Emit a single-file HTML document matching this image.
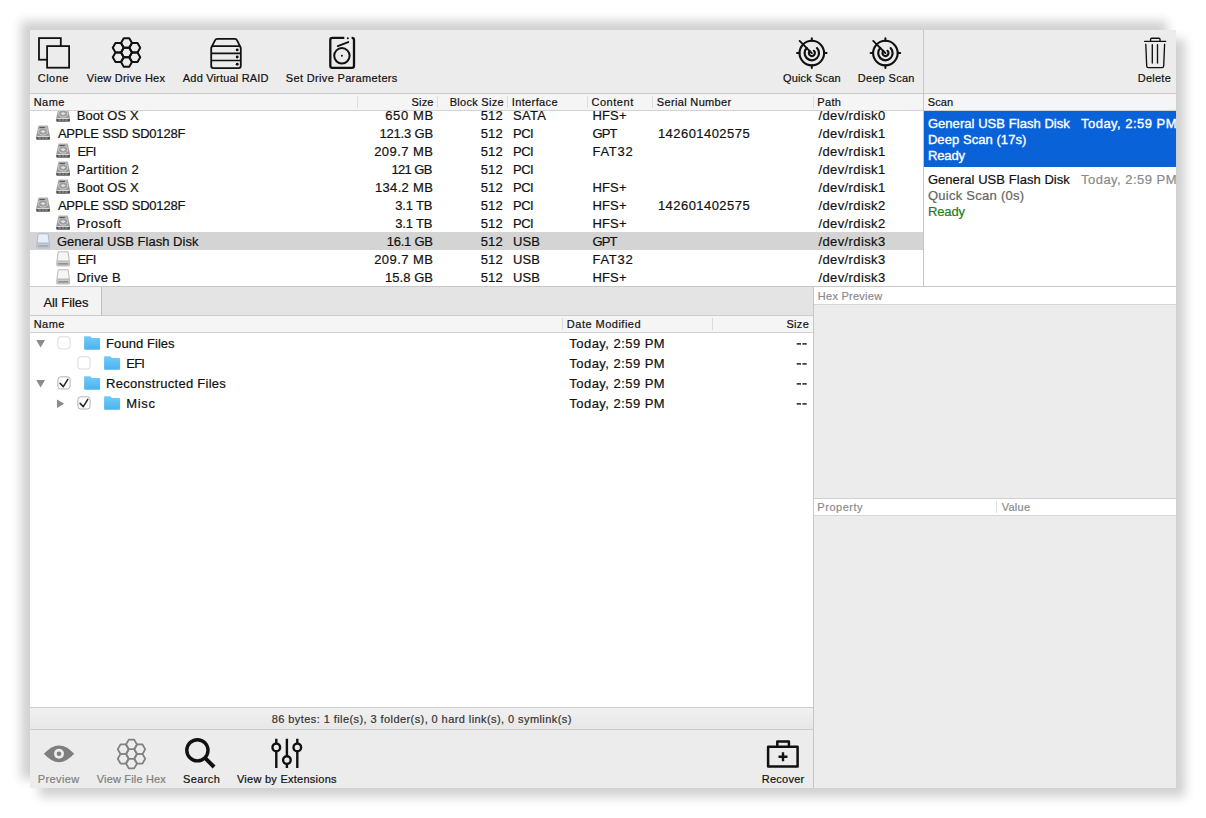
<!DOCTYPE html>
<html><head><meta charset="utf-8"><title>Data Rescue</title>
<style>
html,body{margin:0;padding:0;background:#fff;}
body{width:1206px;height:818px;position:relative;overflow:hidden;font-family:"Liberation Sans",sans-serif;color:#111;}
.a{position:absolute;}
#win{left:30px;top:30px;width:1146px;height:758px;background:#ececec;
 box-shadow:-9px -9px 10px rgba(0,0,0,.185), 9px 9px 10px rgba(0,0,0,.185);}
.t{position:absolute;white-space:pre;-webkit-text-stroke:0.2px currentColor;}
.s11{font-size:11px;line-height:16px;}
.s13{font-size:13px;line-height:18px;}
.sel{-webkit-text-stroke:0.35px #fff;}
.hl{position:absolute;height:1px;}
.vl{position:absolute;width:1px;}
#clip0{position:absolute;left:0;top:111px;width:1206px;height:20px;overflow:hidden;}
#clip0 .t{margin-top:-111px;}
svg{position:absolute;left:0;top:0;}
</style></head>
<body>
<div id="win" class="a"></div>

<!-- top toolbar border -->
<div class="hl" style="left:30px;top:93px;width:1146px;background:#cbcbcb"></div>

<!-- drive table -->
<div class="a" style="left:30px;top:94px;width:893px;height:16px;background:#f5f5f5"></div>
<div class="hl" style="left:30px;top:110px;width:893px;background:#d2d2d2"></div>
<div class="a" style="left:30px;top:111px;width:893px;height:175px;background:#fff"></div>
<div class="a" style="left:30px;top:232px;width:893px;height:18px;background:#d4d4d4"></div>
<!-- drive header separators -->
<div class="vl" style="left:357px;top:96px;height:12px;background:#dcdcdc"></div>
<div class="vl" style="left:437px;top:96px;height:12px;background:#dcdcdc"></div>
<div class="vl" style="left:507px;top:96px;height:12px;background:#dcdcdc"></div>
<div class="vl" style="left:587px;top:96px;height:12px;background:#dcdcdc"></div>
<div class="vl" style="left:652px;top:96px;height:12px;background:#dcdcdc"></div>
<div class="vl" style="left:813px;top:96px;height:12px;background:#dcdcdc"></div>

<!-- scan pane -->
<div class="vl" style="left:923px;top:30px;height:257px;background:#c6c6c6"></div>
<div class="a" style="left:924px;top:94px;width:252px;height:16px;background:#f5f5f5"></div>
<div class="hl" style="left:924px;top:110px;width:252px;background:#d2d2d2"></div>
<div class="a" style="left:924px;top:111px;width:252px;height:175px;background:#fff"></div>
<div class="a" style="left:924px;top:111px;width:252px;height:56px;background:#0a62d8"></div>

<!-- divider under tables -->
<div class="hl" style="left:30px;top:286px;width:1146px;background:#c8c8c8"></div>

<!-- tab bar -->
<div class="a" style="left:30px;top:287px;width:783px;height:28px;background:#e4e4e4"></div>
<div class="a" style="left:30px;top:287px;width:71px;height:28px;background:#f3f3f3"></div>
<div class="vl" style="left:101px;top:287px;height:28px;background:#bfbfbf"></div>
<div class="hl" style="left:30px;top:315px;width:783px;background:#cbcbcb"></div>

<!-- file list -->
<div class="a" style="left:30px;top:316px;width:783px;height:16px;background:#f5f5f5"></div>
<div class="hl" style="left:30px;top:332px;width:783px;background:#d2d2d2"></div>
<div class="a" style="left:30px;top:333px;width:783px;height:374px;background:#fff"></div>
<div class="vl" style="left:562px;top:318px;height:12px;background:#dcdcdc"></div>
<div class="vl" style="left:712px;top:318px;height:12px;background:#dcdcdc"></div>

<!-- status bar -->
<div class="hl" style="left:30px;top:707px;width:783px;background:#cbcbcb"></div>
<div class="a" style="left:30px;top:708px;width:783px;height:21px;background:linear-gradient(#f1f1f1,#e7e7e7)"></div>
<div class="hl" style="left:30px;top:729px;width:783px;background:#cbcbcb"></div>

<!-- right pane -->
<div class="vl" style="left:813px;top:287px;height:501px;background:#c6c6c6"></div>
<div class="a" style="left:814px;top:287px;width:362px;height:17px;background:#fff"></div>
<div class="hl" style="left:814px;top:304px;width:362px;background:#d6d6d6"></div>
<div class="hl" style="left:814px;top:498px;width:362px;background:#d0d0d0"></div>
<div class="a" style="left:814px;top:499px;width:362px;height:16px;background:#fff"></div>
<div class="hl" style="left:814px;top:515px;width:362px;background:#d6d6d6"></div>
<div class="vl" style="left:996px;top:501px;height:12px;background:#e0e0e0"></div>

<svg width="1206" height="818" viewBox="0 0 1206 818">
<defs>
 <!-- honeycomb: 7 flat-top hexagons, R=5.5, centred at 0,0 -->
 <g id="hex1"><path d="M5.5 0 L2.75 4.763 L-2.75 4.763 L-5.5 0 L-2.75 -4.763 L2.75 -4.763 Z"/></g>
 <g id="honey" fill="none" stroke-linejoin="round">
  <use href="#hex1"/>
  <use href="#hex1" y="-9.526"/><use href="#hex1" y="9.526"/>
  <use href="#hex1" x="-8.25" y="-4.763"/><use href="#hex1" x="8.25" y="-4.763"/>
  <use href="#hex1" x="-8.25" y="4.763"/><use href="#hex1" x="8.25" y="4.763"/>
 </g>
 <!-- radar, centred at 0,0 -->
 <g id="radar" fill="none" stroke="#111" stroke-width="2.1" stroke-linecap="round">
  <circle r="12.3"/>
  <path d="M0 -12.3V-14.8 M0 12.3V14.8 M-12.3 0H-14.8 M12.3 0H14.8" stroke-width="2"/>
  <path d="M-5.1 -5.1 A7.2 7.2 0 1 0 5.2 -5" stroke-width="2.2"/>
  <path d="M-2.1 -2.1 A3 3 0 1 0 2.1 -2.3" stroke-width="2.2"/>
  <path d="M0 0 L-12.2 -12.2" stroke-width="1.9"/>
 </g>

 <linearGradient id="gHdd" x1="0" y1="0" x2="0" y2="1"><stop offset="0" stop-color="#b4b4b4"/><stop offset="1" stop-color="#848484"/></linearGradient>
 <linearGradient id="gFol" x1="0" y1="0" x2="0" y2="1"><stop offset="0" stop-color="#70cbfb"/><stop offset="1" stop-color="#4bb3ee"/></linearGradient>
 <!-- HDD 14x15 -->
 <g id="hdd">
  <path d="M2.3 0.2 H11.7 L13.8 10.8 V14 Q13.8 14.8 13 14.8 H1 Q0.2 14.8 0.2 14 V10.8 Z" fill="url(#gHdd)"/>
  <ellipse cx="7" cy="6.3" rx="4.6" ry="3.4" fill="#9c9c9c" stroke="#d2d2d2" stroke-width="0.9"/>
  <path d="M4.2 6.3 L7 4.7 L9.8 6.3 L7 7.9 Z" fill="#dcdcdc"/>
  <rect x="3.4" y="1.6" width="5.4" height="1.3" fill="#5a5a5a"/>
  <rect x="0.7" y="10.6" width="12.6" height="1" fill="#f2f2f2"/>
  <rect x="0.3" y="11.6" width="13.4" height="2.2" fill="#4e4e4e"/>
  <rect x="2.2" y="12.3" width="2.6" height="0.8" fill="#c8c8c8"/><rect x="5.6" y="12.3" width="2.6" height="0.8" fill="#c8c8c8"/><rect x="9" y="12.3" width="2.6" height="0.8" fill="#c8c8c8"/>
 </g>
 <!-- USB drive 14x15 -->
 <g id="usb">
  <path d="M2 0.5 H12 L13.2 9.9 H0.8 Z" fill="#f6f6f6" stroke="#b2b2b2" stroke-width="0.9"/>
  <rect x="0.5" y="9.9" width="13" height="4.8" rx="1" fill="#cbcbcb" stroke="#adadad" stroke-width="0.7"/>
  <rect x="1.9" y="12.1" width="10.2" height="1" fill="#6c6c6c"/>
 </g>
 <g id="usbsel">
  <path d="M2 0.5 H12 L13.2 9.9 H0.8 Z" fill="#e6eefa" stroke="#a9b6c8" stroke-width="0.9"/>
  <rect x="0.5" y="9.9" width="13" height="4.8" rx="1" fill="#c6cdd7" stroke="#a6b0bd" stroke-width="0.7"/>
  <rect x="1.9" y="12.1" width="10.2" height="1" fill="#8893a1"/>
 </g>
 <!-- folder 16x13.5 -->
 <g id="fol"><path d="M0.9 0 H5.6 Q6.2 0 6.7 0.5 L7.6 1.6 Q8 1.9 8.6 1.9 H15 Q16 1.9 16 2.9 V12.5 Q16 13.5 15 13.5 H1 Q0 13.5 0 12.5 V0.9 Q0 0 0.9 0 Z" fill="url(#gFol)"/></g>
 <!-- checkbox 13.2 -->
 <g id="cb0"><rect x="0.5" y="0.5" width="12.2" height="12.2" rx="2.8" fill="#fff" stroke="#dadada"/></g>
 <g id="cb1"><rect x="0.5" y="0.5" width="12.2" height="12.2" rx="2.8" fill="#fff" stroke="#b2b2b2"/>
  <path d="M2.7 7.1 L5.9 10.3 L10.4 3" fill="none" stroke="#222" stroke-width="1.5" stroke-linecap="round" stroke-linejoin="round"/></g>
</defs>

<!-- Clone -->
<g fill="#ececec" stroke="#111" stroke-width="1.8">
 <rect x="39" y="38.1" width="21.8" height="21.6"/>
 <rect x="47.1" y="46.1" width="22" height="21.6"/>
</g>
<!-- View Drive Hex -->
<use href="#honey" x="126.5" y="52.5" stroke="#111" stroke-width="2"/>
<!-- Add Virtual RAID -->
<g fill="none" stroke="#111" stroke-width="1.8" stroke-linejoin="round">
 <rect x="211.2" y="46.2" width="29.6" height="21.9" rx="2.3"/>
 <path d="M211.2 53.4 H240.8 M211.2 60.5 H240.8" stroke-width="1.6"/>
 <path d="M211.9 46.4 L215 40.3 Q215.7 38.9 217.2 38.9 H234.9 Q236.4 38.9 237.1 40.3 L240.1 46.4"/>
</g>
<g fill="#111"><circle cx="237.2" cy="49.9" r="1.45"/><circle cx="237.2" cy="57" r="1.45"/><circle cx="237.2" cy="64.3" r="1.45"/></g>
<!-- Set Drive Parameters -->
<g fill="none" stroke="#111" stroke-linecap="round">
 <path d="M344.3 37.9 H332.4 Q330.3 37.9 330.3 40 V65.7 Q330.3 67.8 332.4 67.8 H351.9 Q354 67.8 354 65.7 V40 Q354 37.9 351.9 37.9 H351.6" stroke-width="2.3" stroke-linecap="butt"/>
 <circle cx="341.9" cy="55.8" r="7.7" stroke-width="2"/>
 <path d="M337.8 46.1 L348.3 42.1" stroke-width="1.9"/>
</g>
<circle cx="341.9" cy="55.8" r="1" fill="#111"/>
<circle cx="347.8" cy="38.3" r="1" fill="#111"/>
<!-- Quick Scan / Deep Scan -->
<use href="#radar" x="811.8" y="53.1"/>
<use href="#radar" x="885.4" y="53.1"/>
<!-- Delete -->
<g fill="none" stroke="#111" stroke-width="1.35" stroke-linecap="round" stroke-linejoin="round">
 <path d="M1144.6 41.3 H1165.8"/>
 <path d="M1150.6 41.3 V39.3 Q1150.6 38.2 1151.7 38.2 H1158.9 Q1160 38.2 1160 39.3 V41.3"/>
 <path d="M1145.8 44.3 L1146.7 66 Q1146.8 67.6 1148.4 67.6 H1162 Q1163.6 67.6 1163.7 66 L1164.6 44.3"/>
 <path d="M1152.3 44.6 V63 M1157.5 44.6 V63"/>
</g>
<clipPath id="cp0"><rect x="30" y="111" width="893" height="176"/></clipPath>
<g clip-path="url(#cp0)">
<use href="#hdd" x="56.15" y="107.3"/>
<use href="#hdd" x="36.1" y="125.3"/>
<use href="#hdd" x="56.15" y="143.3"/>
<use href="#hdd" x="56.15" y="161.3"/>
<use href="#hdd" x="56.15" y="179.3"/>
<use href="#hdd" x="36.1" y="197.3"/>
<use href="#hdd" x="56.15" y="215.3"/>
<use href="#usbsel" x="36.1" y="233.3"/>
<use href="#usb" x="56.15" y="251.3"/>
<use href="#usb" x="56.15" y="269.3"/>
</g>
<use href="#cb0" x="57.4" y="336.3"/>
<use href="#fol" x="84.1" y="336.2"/>
<path d="M36.2 340.1 h8.8 l-4.4 7.3 z" fill="#8a8a8a"/>
<use href="#cb0" x="77.4" y="356.3"/>
<use href="#fol" x="104.1" y="356.2"/>
<use href="#cb1" x="57.4" y="376.3"/>
<use href="#fol" x="84.1" y="376.2"/>
<path d="M36.2 380.1 h8.8 l-4.4 7.3 z" fill="#8a8a8a"/>
<use href="#cb1" x="77.4" y="396.3"/>
<use href="#fol" x="104.1" y="396.2"/>
<path d="M57 399.5 v8.4 l7.2 -4.2 z" fill="#8a8a8a"/>

<!-- size dashes --><rect x="796.7" y="343.2" width="4.3" height="1.4" fill="#111"/><rect x="802.4" y="343.2" width="4.3" height="1.4" fill="#111"/><rect x="796.7" y="363.2" width="4.3" height="1.4" fill="#111"/><rect x="802.4" y="363.2" width="4.3" height="1.4" fill="#111"/><rect x="796.7" y="383.2" width="4.3" height="1.4" fill="#111"/><rect x="802.4" y="383.2" width="4.3" height="1.4" fill="#111"/><rect x="796.7" y="403.2" width="4.3" height="1.4" fill="#111"/><rect x="802.4" y="403.2" width="4.3" height="1.4" fill="#111"/>
<!-- Preview (eye) -->
<path d="M43.9 753.8 Q59 737 74.2 753.8 Q59 770.6 43.9 753.8 Z" fill="#7e7e7e"/>
<circle cx="59" cy="753.8" r="5" fill="#ececec"/><circle cx="59" cy="753.8" r="2.3" fill="#7e7e7e"/>
<!-- View File Hex -->
<use href="#honey" x="131.5" y="754" stroke="#818181" stroke-width="1.7"/>
<!-- Search -->
<circle cx="197.4" cy="750.3" r="10.6" fill="none" stroke="#111" stroke-width="3.4"/>
<path d="M205.2 758.1 L214.1 767" stroke="#111" stroke-width="4" stroke-linecap="butt"/>
<!-- View by Extensions -->
<g stroke="#111" stroke-width="2.4" fill="#ececec" stroke-linecap="butt">
 <path d="M276.3 738.7 V768 M286.9 738.7 V768 M297.3 738.7 V768"/>
 <circle cx="276.3" cy="747.4" r="3.8"/><circle cx="286.9" cy="760.1" r="3.8"/><circle cx="297.3" cy="747.4" r="3.8"/>
</g>
<!-- Recover -->
<g fill="none" stroke="#111" stroke-width="2.5" stroke-linejoin="round">
 <rect x="768.1" y="746.7" width="29.5" height="19.7"/>
 <path d="M777.3 746.7 V741.4 H788.9 V746.7"/>
 <path d="M783 752.3 V761.3 M778.5 756.8 H787.5" stroke-width="2.4"/>
</g>

</svg>


<div id="clip0">
<span class="t s13" style="left:76.70px;top:107.00px;letter-spacing:0.062px">Boot OS X</span>
<span class="t s13" style="left:385.20px;top:107.00px;letter-spacing:0.620px">650 MB</span>
<span class="t s13" style="left:480.70px;top:107.00px;letter-spacing:0.200px">512</span>
<span class="t s13" style="left:513.10px;top:107.00px;letter-spacing:0.267px">SATA</span>
<span class="t s13" style="left:592.60px;top:107.00px;letter-spacing:0.100px">HFS+</span>
<span class="t s13" style="left:818.50px;top:107.00px;letter-spacing:0.380px">/dev/rdisk0</span>
</div>
<span class="t s11" style="left:37.75px;top:69.60px;letter-spacing:0.462px">Clone</span>
<span class="t s11" style="left:86.85px;top:69.60px;letter-spacing:0.242px">View Drive Hex</span>
<span class="t s11" style="left:182.85px;top:69.60px;letter-spacing:0.177px">Add Virtual RAID</span>
<span class="t s11" style="left:285.85px;top:69.60px;letter-spacing:0.334px">Set Drive Parameters</span>
<span class="t s11" style="left:782.95px;top:69.60px;letter-spacing:0.150px">Quick Scan</span>
<span class="t s11" style="left:857.85px;top:69.60px;letter-spacing:0.269px">Deep Scan</span>
<span class="t s11" style="left:1137.75px;top:69.60px;letter-spacing:0.250px">Delete</span>
<span class="t s11" style="left:33.75px;top:93.90px;letter-spacing:0.417px">Name</span>
<span class="t s11" style="left:411.45px;top:93.90px;letter-spacing:0.217px">Size</span>
<span class="t s11" style="left:449.65px;top:93.90px;letter-spacing:0.283px">Block Size</span>
<span class="t s11" style="left:511.75px;top:93.90px;letter-spacing:0.381px">Interface</span>
<span class="t s11" style="left:591.45px;top:93.90px;letter-spacing:0.542px">Content</span>
<span class="t s11" style="left:656.75px;top:93.90px;letter-spacing:0.346px">Serial Number</span>
<span class="t s11" style="left:817.25px;top:93.90px;letter-spacing:0.350px">Path</span>
<span class="t s11" style="left:927.75px;top:93.90px;letter-spacing:0.117px">Scan</span>
<span class="t s13" style="left:57.90px;top:125.00px;letter-spacing:-0.206px">APPLE SSD SD0128F</span>
<span class="t s13" style="left:379.40px;top:125.00px;letter-spacing:-0.157px">121.3 GB</span>
<span class="t s13" style="left:480.70px;top:125.00px;letter-spacing:0.200px">512</span>
<span class="t s13" style="left:513.10px;top:125.00px;letter-spacing:-0.550px">PCI</span>
<span class="t s13" style="left:592.60px;top:125.00px;letter-spacing:-0.950px">GPT</span>
<span class="t s13" style="left:657.90px;top:125.00px;letter-spacing:0.455px">142601402575</span>
<span class="t s13" style="left:818.50px;top:125.00px;letter-spacing:0.380px">/dev/rdisk1</span>
<span class="t s13" style="left:77.40px;top:143.00px;letter-spacing:-0.650px">EFI</span>
<span class="t s13" style="left:374.20px;top:143.00px;letter-spacing:0.443px">209.7 MB</span>
<span class="t s13" style="left:480.70px;top:143.00px;letter-spacing:0.200px">512</span>
<span class="t s13" style="left:513.10px;top:143.00px;letter-spacing:-0.550px">PCI</span>
<span class="t s13" style="left:592.60px;top:143.00px;letter-spacing:0.675px">FAT32</span>
<span class="t s13" style="left:818.50px;top:143.00px;letter-spacing:0.380px">/dev/rdisk1</span>
<span class="t s13" style="left:76.70px;top:161.00px;letter-spacing:0.350px">Partition 2</span>
<span class="t s13" style="left:391.40px;top:161.00px;letter-spacing:-0.620px">121 GB</span>
<span class="t s13" style="left:480.70px;top:161.00px;letter-spacing:0.200px">512</span>
<span class="t s13" style="left:513.10px;top:161.00px;letter-spacing:-0.550px">PCI</span>
<span class="t s13" style="left:818.50px;top:161.00px;letter-spacing:0.380px">/dev/rdisk1</span>
<span class="t s13" style="left:76.70px;top:179.00px;letter-spacing:0.062px">Boot OS X</span>
<span class="t s13" style="left:375.00px;top:179.00px;letter-spacing:0.329px">134.2 MB</span>
<span class="t s13" style="left:480.70px;top:179.00px;letter-spacing:0.200px">512</span>
<span class="t s13" style="left:513.10px;top:179.00px;letter-spacing:-0.550px">PCI</span>
<span class="t s13" style="left:592.60px;top:179.00px;letter-spacing:0.100px">HFS+</span>
<span class="t s13" style="left:818.50px;top:179.00px;letter-spacing:0.380px">/dev/rdisk1</span>
<span class="t s13" style="left:57.90px;top:197.00px;letter-spacing:-0.206px">APPLE SSD SD0128F</span>
<span class="t s13" style="left:395.20px;top:197.00px;letter-spacing:-0.180px">3.1 TB</span>
<span class="t s13" style="left:480.70px;top:197.00px;letter-spacing:0.200px">512</span>
<span class="t s13" style="left:513.10px;top:197.00px;letter-spacing:-0.550px">PCI</span>
<span class="t s13" style="left:592.60px;top:197.00px;letter-spacing:0.100px">HFS+</span>
<span class="t s13" style="left:657.90px;top:197.00px;letter-spacing:0.455px">142601402575</span>
<span class="t s13" style="left:818.50px;top:197.00px;letter-spacing:0.380px">/dev/rdisk2</span>
<span class="t s13" style="left:76.70px;top:215.00px;letter-spacing:0.500px">Prosoft</span>
<span class="t s13" style="left:395.20px;top:215.00px;letter-spacing:-0.180px">3.1 TB</span>
<span class="t s13" style="left:480.70px;top:215.00px;letter-spacing:0.200px">512</span>
<span class="t s13" style="left:513.10px;top:215.00px;letter-spacing:-0.550px">PCI</span>
<span class="t s13" style="left:592.60px;top:215.00px;letter-spacing:0.100px">HFS+</span>
<span class="t s13" style="left:818.50px;top:215.00px;letter-spacing:0.380px">/dev/rdisk2</span>
<span class="t s13" style="left:56.90px;top:233.00px;letter-spacing:0.033px">General USB Flash Disk</span>
<span class="t s13" style="left:386.80px;top:233.00px;letter-spacing:-0.250px">16.1 GB</span>
<span class="t s13" style="left:480.70px;top:233.00px;letter-spacing:0.200px">512</span>
<span class="t s13" style="left:513.10px;top:233.00px;letter-spacing:0.050px">USB</span>
<span class="t s13" style="left:592.60px;top:233.00px;letter-spacing:-0.950px">GPT</span>
<span class="t s13" style="left:818.50px;top:233.00px;letter-spacing:0.380px">/dev/rdisk3</span>
<span class="t s13" style="left:77.40px;top:251.00px;letter-spacing:-0.650px">EFI</span>
<span class="t s13" style="left:374.20px;top:251.00px;letter-spacing:0.443px">209.7 MB</span>
<span class="t s13" style="left:480.70px;top:251.00px;letter-spacing:0.200px">512</span>
<span class="t s13" style="left:513.10px;top:251.00px;letter-spacing:0.050px">USB</span>
<span class="t s13" style="left:592.60px;top:251.00px;letter-spacing:0.675px">FAT32</span>
<span class="t s13" style="left:818.50px;top:251.00px;letter-spacing:0.380px">/dev/rdisk3</span>
<span class="t s13" style="left:76.70px;top:269.00px;letter-spacing:0.217px">Drive B</span>
<span class="t s13" style="left:384.90px;top:269.00px;letter-spacing:0.067px">15.8 GB</span>
<span class="t s13" style="left:480.70px;top:269.00px;letter-spacing:0.200px">512</span>
<span class="t s13" style="left:513.10px;top:269.00px;letter-spacing:0.050px">USB</span>
<span class="t s13" style="left:592.60px;top:269.00px;letter-spacing:0.100px">HFS+</span>
<span class="t s13" style="left:818.50px;top:269.00px;letter-spacing:0.380px">/dev/rdisk3</span>
<span class="t s13 sel" style="left:927.90px;top:115.00px;letter-spacing:0.052px;color:#fff">General USB Flash Disk</span>
<span class="t s13 sel" style="left:1081.00px;top:115.00px;letter-spacing:0.477px;color:#fff">Today, 2:59 PM</span>
<span class="t s13 sel" style="left:927.90px;top:131.00px;letter-spacing:0.064px;color:#fff">Deep Scan (17s)</span>
<span class="t s13 sel" style="left:927.90px;top:147.00px;letter-spacing:-0.100px;color:#fff">Ready</span>
<span class="t s13" style="left:927.90px;top:171.00px;letter-spacing:0.052px">General USB Flash Disk</span>
<span class="t s13" style="left:1081.00px;top:171.00px;letter-spacing:0.477px;color:#8a8a8a">Today, 2:59 PM</span>
<span class="t s13" style="left:927.90px;top:187.00px;letter-spacing:0.271px;color:#646464">Quick Scan (0s)</span>
<span class="t s13" style="left:927.90px;top:203.00px;letter-spacing:-0.100px;color:#1d7d1d">Ready</span>
<span class="t s13" style="left:43.40px;top:294.10px;letter-spacing:-0.050px">All Files</span>
<span class="t s11" style="left:33.75px;top:315.70px;letter-spacing:0.417px">Name</span>
<span class="t s11" style="left:566.85px;top:315.70px;letter-spacing:0.488px">Date Modified</span>
<span class="t s11" style="left:786.45px;top:315.70px;letter-spacing:0.317px">Size</span>
<span class="t s13" style="left:106.10px;top:334.80px;letter-spacing:0.060px">Found Files</span>
<span class="t s13" style="left:569.30px;top:334.80px;letter-spacing:0.462px">Today, 2:59 PM</span>
<span class="t s13" style="left:126.30px;top:354.80px;letter-spacing:-0.800px">EFI</span>
<span class="t s13" style="left:569.30px;top:354.80px;letter-spacing:0.462px">Today, 2:59 PM</span>
<span class="t s13" style="left:106.10px;top:374.80px;letter-spacing:0.272px">Reconstructed Files</span>
<span class="t s13" style="left:569.30px;top:374.80px;letter-spacing:0.462px">Today, 2:59 PM</span>
<span class="t s13" style="left:126.30px;top:394.80px;letter-spacing:0.633px">Misc</span>
<span class="t s13" style="left:569.30px;top:394.80px;letter-spacing:0.462px">Today, 2:59 PM</span>
<span class="t s11" style="left:817.85px;top:287.70px;letter-spacing:0.255px;color:#8b8b8b">Hex Preview</span>
<span class="t s11" style="left:817.35px;top:498.60px;letter-spacing:0.521px;color:#8b8b8b">Property</span>
<span class="t s11" style="left:1001.75px;top:498.60px;letter-spacing:0.238px;color:#8b8b8b">Value</span>
<span class="t s11" style="left:271.75px;top:710.80px;letter-spacing:0.422px;color:#333">86 bytes: 1 file(s), 3 folder(s), 0 hard link(s), 0 symlink(s)</span>
<span class="t s11" style="left:37.75px;top:770.60px;letter-spacing:0.392px;color:#808080">Preview</span>
<span class="t s11" style="left:96.75px;top:770.60px;letter-spacing:0.171px;color:#808080">View File Hex</span>
<span class="t s11" style="left:182.95px;top:770.60px;letter-spacing:0.410px">Search</span>
<span class="t s11" style="left:236.95px;top:770.60px;letter-spacing:0.262px">View by Extensions</span>
<span class="t s11" style="left:761.75px;top:770.60px;letter-spacing:0.258px">Recover</span>
</body></html>
